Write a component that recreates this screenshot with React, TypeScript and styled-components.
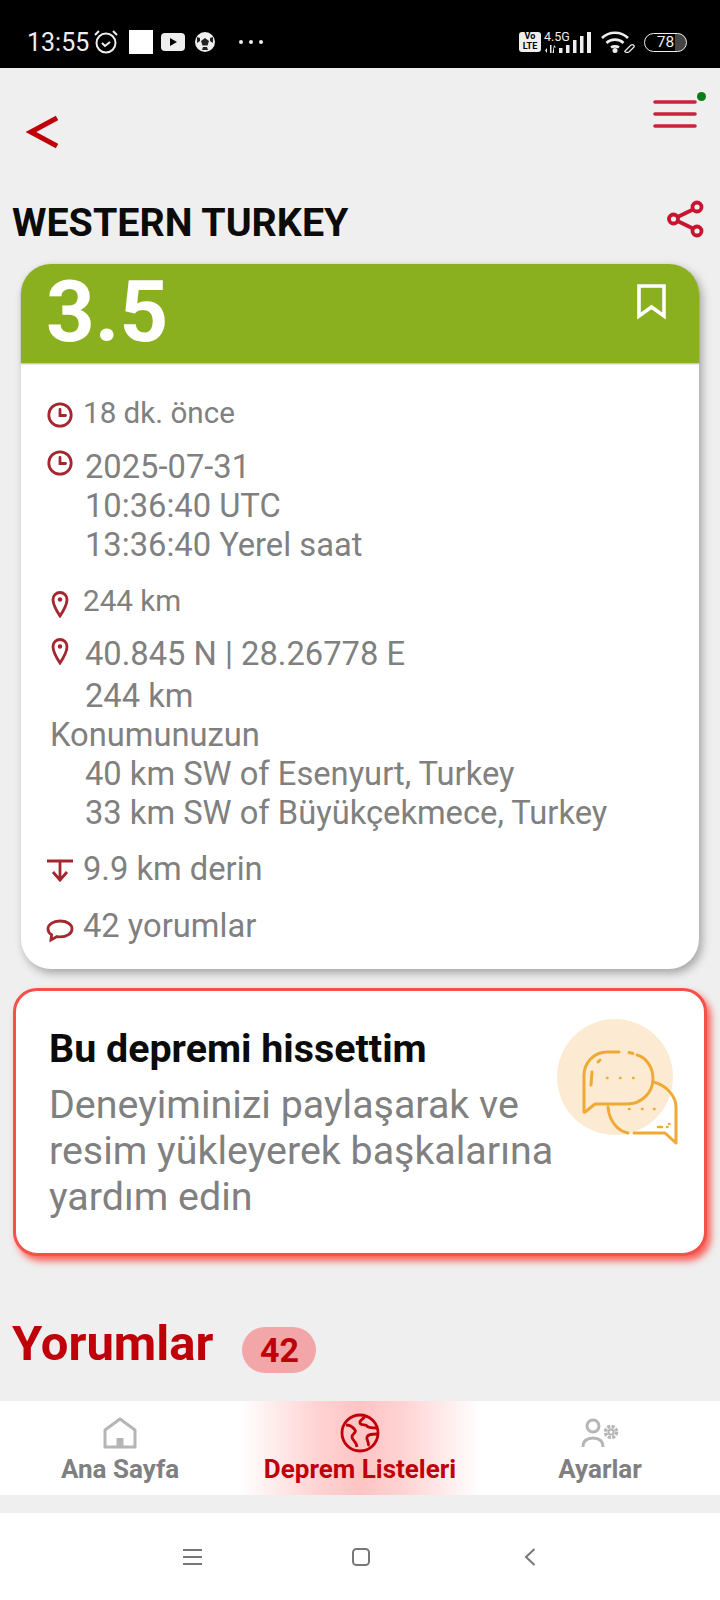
import React from "react";
import styled, { createGlobalStyle } from "styled-components";

const RED = "#c00008";
const ICON_RED = "#a5262f";
const GREY = "#808080";

const GlobalStyle = createGlobalStyle`
  html, body {
    margin: 0;
    padding: 0;
    background: #efefef;
  }
  body {
    font-family: Roboto, "Noto Sans", sans-serif;
  }
`;

const Page = styled.div`
  width: 720px;
  height: 1600px;
  display: flex;
  flex-direction: column;
  overflow: hidden;
  background: #efefef;
`;

const StatusBar = styled.div`
  height: 68px;
  flex: none;
  background: #000;
  color: #eee;
  display: flex;
  align-items: center;
  justify-content: space-between;
  padding: 16px 33px 0 27px;
  box-sizing: border-box;
`;

const StatusGroup = styled.div`
  display: flex;
  align-items: center;
`;

const Clock = styled.span`
  font-size: 25px;
  margin-right: 4px;
`;

const WhiteSquare = styled.span`
  width: 24px;
  height: 24px;
  background: #fff;
  margin: 0 8px 0 10px;
`;

const Dots = styled.div`
  display: flex;
  gap: 6px;
  margin-left: 23px;

  span {
    width: 4px;
    height: 4px;
    border-radius: 50%;
    background: #eee;
  }
`;

const Volte = styled.span`
  width: 22px;
  height: 20px;
  background: #eee;
  color: #000;
  border-radius: 3px;
  font-size: 9px;
  line-height: 9.5px;
  font-weight: 700;
  text-align: center;
  margin-right: 3px;
`;

const Net = styled.span`
  position: relative;
  width: 48px;
  height: 21px;
  margin-right: 9px;
`;

const NetLabel = styled.span`
  position: absolute;
  left: 0;
  top: -2px;
  font-size: 12.5px;
  line-height: 13px;
`;

const Battery = styled.span`
  box-sizing: border-box;
  width: 43px;
  height: 19px;
  border: 1.5px solid #eee;
  border-radius: 10px;
  font-size: 15.5px;
  line-height: 16px;
  text-align: center;
  margin-left: 8px;
  background: linear-gradient(90deg, #000 72%, #444 72%);
  overflow: hidden;
`;

const Header = styled.div`
  height: 132px;
  flex: none;
  display: flex;
  justify-content: space-between;
  padding: 47px 22px 0 26px;
  box-sizing: border-box;
`;

const MenuWrap = styled.div`
  position: relative;
  width: 46px;
  height: 30px;
  margin-top: -16px;
`;

const MenuDot = styled.span`
  position: absolute;
  top: -7.5px;
  right: -7.5px;
  width: 9px;
  height: 9px;
  border-radius: 50%;
  background: #0b7d16;
`;

const TitleRow = styled.div`
  height: 64px;
  flex: none;
  display: flex;
  align-items: flex-start;
  justify-content: space-between;
  padding: 0 15px 0 12px;
`;

const Title = styled.h1`
  margin: 2px 0 0;
  font-size: 39.4px;
  line-height: 42px;
  font-weight: 700;
  color: #0b0b0b;
`;

const InfoCard = styled.section`
  width: 678px;
  height: 705px;
  flex: none;
  margin-left: 21px;
  background: #fff;
  border-radius: 30px;
  box-shadow: 3px 4px 10px rgba(0, 0, 0, 0.32);
`;

const Magnitude = styled.div`
  height: 99px;
  background: #8bb01f;
  border-radius: 30px 30px 0 0;
  display: flex;
  justify-content: space-between;
  padding: 0 32px 0 25px;
  color: #fff;
  box-shadow: 0 1px 2px rgba(0, 0, 0, 0.3);
`;

const MagnitudeValue = styled.span`
  font-size: 85px;
  line-height: 97px;
  font-weight: 700;
`;

const BookmarkWrap = styled.div`
  margin-top: 20px;
`;

const CardBody = styled.div`
  padding: 33px 20px 0 24px;
  color: ${GREY};
`;

const InfoRow = styled.div<{ $gap: number; $small?: boolean }>`
  display: flex;
  margin-top: ${(p) => p.$gap}px;
  font-size: ${(p) => (p.$small ? 29.6 : 32.7)}px;
  line-height: ${(p) => (p.$small ? 34 : 39)}px;
`;

const IconSlot = styled.span<{ $top: number; $small?: boolean }>`
  width: 30px;
  flex: none;
  display: flex;
  justify-content: center;
  margin-top: ${(p) => p.$top}px;
  margin-right: ${(p) => (p.$small ? 8 : 10)}px;
`;

const Lines = styled.div`
  white-space: pre;
`;

const Subhead = styled.div`
  font-size: 32.7px;
  line-height: 39px;
  margin-left: 5px;
`;

const IndentLines = styled.div<{ $top?: number }>`
  margin: ${(p) => p.$top ?? 0}px 0 0 40px;
  font-size: 32.7px;
  line-height: 39px;
  white-space: pre;
`;

const FeltCard = styled.section`
  width: 694px;
  height: 268px;
  flex: none;
  box-sizing: border-box;
  margin: 19px 0 0 13px;
  padding: 37px 20px 0 33px;
  background: #fff;
  border: 3px solid #f4514a;
  border-radius: 24px;
  box-shadow: 4px 5px 7px rgba(250, 60, 50, 0.8);
  display: flex;
  justify-content: space-between;
`;

const FeltText = styled.div`
  width: 520px;
`;

const FeltTitle = styled.h2`
  margin: 0 0 12px;
  font-size: 39.4px;
  line-height: 42px;
  font-weight: 700;
  color: #0b0b0b;
`;

const FeltBody = styled.p`
  margin: 0;
  font-size: 39.4px;
  line-height: 46px;
  color: ${GREY};
`;

const FeltArt = styled.div`
  margin: -9px 5px 0 0;
`;

const CommentsHead = styled.div`
  flex: 1;
  display: flex;
  align-items: flex-start;
  gap: 29px;
  padding: 60px 0 0 12px;
`;

const CommentsTitle = styled.h2`
  margin: 0;
  font-size: 49px;
  line-height: 56px;
  font-weight: 700;
  color: ${RED};
`;

const CountBadge = styled.span`
  width: 74px;
  height: 46px;
  margin-top: 11px;
  border-radius: 23px;
  background: #f2a6a8;
  color: ${RED};
  font-size: 34px;
  font-weight: 700;
  line-height: 46px;
  text-align: center;
`;

const TabBar = styled.nav`
  height: 94px;
  flex: none;
  background: #fff;
  display: grid;
  grid-template-columns: 240px 240px 240px;
`;

const Tab = styled.div<{ $active?: boolean }>`
  display: flex;
  flex-direction: column;
  align-items: center;
  padding-top: 12px;
  box-sizing: border-box;
  font-size: 26px;
  line-height: 32px;
  font-weight: 700;
  color: ${(p) => (p.$active ? RED : GREY)};
  background: ${(p) =>
    p.$active
      ? "linear-gradient(90deg, rgba(255,190,190,0) 0%, rgba(255,200,200,.8) 32%, rgba(255,190,190,.9) 50%, rgba(255,200,200,.8) 68%, rgba(255,190,190,0) 100%)"
      : "none"};
`;

const TabIcon = styled.span`
  height: 40px;
  display: flex;
  align-items: center;
`;

const Gap = styled.div`
  height: 18px;
  flex: none;
`;

const SystemNav = styled.div`
  height: 87px;
  flex: none;
  background: #fff;
  display: grid;
  grid-template-columns: 169px 172px auto;
  align-items: start;
  padding: 35px 0 0 183px;
  box-sizing: border-box;
`;

const ClockIcon = () => (
  <svg width="26" height="26" viewBox="0 0 26 26" fill="none" stroke={ICON_RED} strokeWidth="2.8" strokeLinecap="round">
    <circle cx="13" cy="13" r="11.2" />
    <path d="M13 7.500V13.500H18.500" />
  </svg>
);

const PinIcon = () => (
  <svg width="18" height="28" viewBox="0 0 18 28" fill="none" stroke={ICON_RED} strokeWidth="2.8">
    <path d="M9 26C5 20 2 15 2 9.500a7 7 0 0 1 14 0C16 15 13 20 9 26Z" />
    <circle cx="9" cy="9.500" r="2.200" fill={ICON_RED} stroke="none" />
  </svg>
);

const DepthIcon = () => (
  <svg width="28" height="26" viewBox="0 0 28 26" fill="none" stroke={ICON_RED} strokeWidth="2.800">
    <path d="M1 3H27M14 3V21M7 14L14 22L21 14" />
  </svg>
);

const CommentIcon = () => (
  <svg width="28" height="26" viewBox="0 0 28 26" fill="none" stroke={ICON_RED} strokeWidth="2.800">
    <path d="M14 4C7 4 2 7.500 2 12c0 2.800 1.600 4.600 3.600 5.800L5 23l6-3.400c1 .2 2 .3 3 .3 7 0 12-3.400 12-8S21 4 14 4Z" />
  </svg>
);

const ChatArt = () => (
  <svg width="122" height="126" viewBox="0 0 122 126" fill="none" stroke="#eeaa35" strokeWidth="3" strokeLinecap="round" strokeLinejoin="round">
    <circle cx="58" cy="58" r="58" fill="#fcebd2" stroke="none" />
    <path d="M28 93L38 85H70C85 85 96 73 96 60C96 47 88 38 80 36" />
    <path d="M72 33.500L76 34.500" />
    <path d="M62 33H50C37 33 27 44 27 56V93" />
    <path d="M34 66L35 53M41 43L43 41" />
    <path d="M96 63C110 66 119 78 119 88V124L108 114H77" />
    <path d="M71 114C60 112 52 101 51 88" />
    <path d="M50 59H50.500M63 59H63.500M76 59H76.500M72 90H72.500M85 90H85.500M97 90H97.500M101 108H105M110 108H110.500M112 105H112.500" strokeWidth="2.500" />
  </svg>
);

export default function App() {
  return (
    <Page>
      <GlobalStyle />
      <StatusBar>
        <StatusGroup>
          <Clock>13:55</Clock>
          <svg width="26" height="26" viewBox="0 0 26 26" fill="none" stroke="#eee" strokeWidth="2">
            <circle cx="13" cy="14" r="9.500" />
            <path d="M9 14l3 3 5-4M2 6l4-4M24 6l-4-4" />
          </svg>
          <WhiteSquare />
          <svg width="24" height="18" viewBox="0 0 24 18">
            <rect width="24" height="18" rx="4" fill="#eee" />
            <path d="M9 5l7 4-7 4Z" fill="#000" />
          </svg>
          <svg width="22" height="22" viewBox="0 0 22 22" style={{ marginLeft: 9 }}>
            <circle cx="11" cy="11" r="10" fill="#eee" />
            <path d="M11 7l4 3-1.500 4.500h-5L7 10ZM3 6l3 1 0 3-3 2ZM19 6l-3 1 0 3 3 2ZM8 19l1-3h4l1 3Z" fill="#222" />
          </svg>
          <Dots>
            <span />
            <span />
            <span />
          </Dots>
        </StatusGroup>
        <StatusGroup>
          <Volte>
            Vo
            <br />
            LTE
          </Volte>
          <Net>
            <NetLabel>4.5G</NetLabel>
            <svg width="48" height="21" viewBox="0 0 48 21" fill="#eee">
              <path d="M3 16l-2 2.500 2 2.500ZM6 13h1.500v8H6ZM10 13l2 2.500h-2v5.500H8.500Z" />
              <rect x="15" y="16" width="3.500" height="5" />
              <rect x="22" y="13" width="3.500" height="8" />
              <rect x="29" y="8" width="3.500" height="13" />
              <rect x="36" y="4" width="3.500" height="17" />
              <rect x="43" y="0" width="4" height="21" />
            </svg>
          </Net>
          <svg width="35" height="22" viewBox="0 0 35 22" fill="none" stroke="#eee" strokeWidth="2.600">
            <path d="M1 7C8 0 20 0 27 7M5.500 12C10 7.500 18 7.500 22.500 12M10 16.500C12 15 16 15 18 16.500" />
            <circle cx="14" cy="19.500" r="2.500" fill="#eee" stroke="none" />
            <path d="M24 20l6-6c2-1 4 1 3 2l-5 5c-2 1-5-0-4-1Z" strokeWidth="1.200" />
          </svg>
          <Battery>78</Battery>
        </StatusGroup>
      </StatusBar>

      <Header>
        <svg width="32" height="34" viewBox="0 0 32 34" fill="none" stroke={RED} strokeWidth="5">
          <path d="M31 3L5 17L31 31" />
        </svg>
        <MenuWrap>
          <svg width="46" height="30" viewBox="0 0 46 30" stroke="#c8233a" strokeWidth="3.600" strokeLinecap="round">
            <path d="M3 3H43M3 15H43M3 27H43" />
          </svg>
          <MenuDot />
        </MenuWrap>
      </Header>

      <TitleRow>
        <Title>WESTERN TURKEY</Title>
        <svg width="38" height="38" viewBox="0 0 38 38" fill="none" stroke="#c8142f" strokeWidth="3.800">
          <circle cx="30" cy="7" r="4.500" />
          <circle cx="6.500" cy="19" r="4.500" />
          <circle cx="30" cy="31" r="4.500" />
          <path d="M26 9.500L10.500 17M10.500 21L26 28.500" />
        </svg>
      </TitleRow>

      <InfoCard>
        <Magnitude>
          <MagnitudeValue>3.5</MagnitudeValue>
          <BookmarkWrap>
            <svg width="30" height="36" viewBox="0 0 30 36" fill="none" stroke="#fff" strokeWidth="3.600">
              <path d="M2 2H27V32L14.500 23L2 32Z" />
            </svg>
          </BookmarkWrap>
        </Magnitude>
        <CardBody>
          <InfoRow $gap={0} $small>
            <IconSlot $top={6} $small><ClockIcon /></IconSlot>
            <Lines>18 dk. önce</Lines>
          </InfoRow>
          <InfoRow $gap={18}>
            <IconSlot $top={2}><ClockIcon /></IconSlot>
            <Lines>{"2025-07-31\n10:36:40 UTC\n13:36:40 Yerel saat"}</Lines>
          </InfoRow>
          <InfoRow $gap={19} $small>
            <IconSlot $top={6} $small><PinIcon /></IconSlot>
            <Lines>244 km</Lines>
          </InfoRow>
          <InfoRow $gap={17}>
            <IconSlot $top={2}><PinIcon /></IconSlot>
            <Lines>40.845 N | 28.26778 E</Lines>
          </InfoRow>
          <IndentLines $top={3}>244 km</IndentLines>
          <Subhead>Konumunuzun</Subhead>
          <IndentLines>{"40 km SW of Esenyurt, Turkey\n33 km SW of Büyükçekmece, Turkey"}</IndentLines>
          <InfoRow $gap={17}>
            <IconSlot $top={8} $small><DepthIcon /></IconSlot>
            <Lines>9.9 km derin</Lines>
          </InfoRow>
          <InfoRow $gap={18}>
            <IconSlot $top={10} $small><CommentIcon /></IconSlot>
            <Lines>42 yorumlar</Lines>
          </InfoRow>
        </CardBody>
      </InfoCard>

      <FeltCard>
        <FeltText>
          <FeltTitle>Bu depremi hissettim</FeltTitle>
          <FeltBody>Deneyiminizi paylaşarak ve resim yükleyerek başkalarına yardım edin</FeltBody>
        </FeltText>
        <FeltArt>
          <ChatArt />
        </FeltArt>
      </FeltCard>

      <CommentsHead>
        <CommentsTitle>Yorumlar</CommentsTitle>
        <CountBadge>42</CountBadge>
      </CommentsHead>

      <TabBar>
        <Tab>
          <TabIcon>
            <svg width="34" height="32" viewBox="0 0 34 32" fill="none" stroke="#b5b5b5" strokeWidth="3" strokeLinejoin="round">
              <path d="M2 13L17 2L32 13V30H2Z" />
              <rect x="13.500" y="21" width="7" height="9" fill="#b5b5b5" stroke="none" />
            </svg>
          </TabIcon>
          Ana Sayfa
        </Tab>
        <Tab $active>
          <TabIcon>
            <svg width="40" height="40" viewBox="0 0 40 40" fill="none" stroke={RED} strokeWidth="2.800">
              <circle cx="20" cy="20" r="18" />
              <path d="M6 12c5 0 7 2 9 5s-3 3-3 7 4 3 5 10M25 3c-2 4-6 4-5 7s6 1 7 3 6 2 10 2M37 21c-5 0-9 0-10 3s3 6 1 9" />
            </svg>
          </TabIcon>
          Deprem Listeleri
        </Tab>
        <Tab>
          <TabIcon>
            <svg width="38" height="30" viewBox="0 0 38 30" fill="none" stroke="#b5b5b5" strokeWidth="3">
              <circle cx="12" cy="8" r="6" />
              <path d="M2 29c0-6 4-9 10-9s10 3 10 9" />
              <circle cx="30" cy="14" r="2.500" strokeWidth="2" />
              <circle cx="30" cy="14" r="5.500" strokeWidth="3.500" strokeDasharray="3 1.300" />
            </svg>
          </TabIcon>
          Ayarlar
        </Tab>
      </TabBar>
      <Gap />
      <SystemNav>
        <svg width="19" height="18" viewBox="0 0 19 18" stroke="#777" strokeWidth="2">
          <path d="M0 2H19M0 9H19M0 16H19" />
        </svg>
        <svg width="18" height="18" viewBox="0 0 18 18" fill="none" stroke="#777" strokeWidth="2">
          <rect x="1" y="1" width="16" height="16" rx="3.500" />
        </svg>
        <svg width="12" height="18" viewBox="0 0 12 18" fill="none" stroke="#777" strokeWidth="2">
          <path d="M10.500 1L2 9L10.500 17" />
        </svg>
      </SystemNav>
    </Page>
  );
}
